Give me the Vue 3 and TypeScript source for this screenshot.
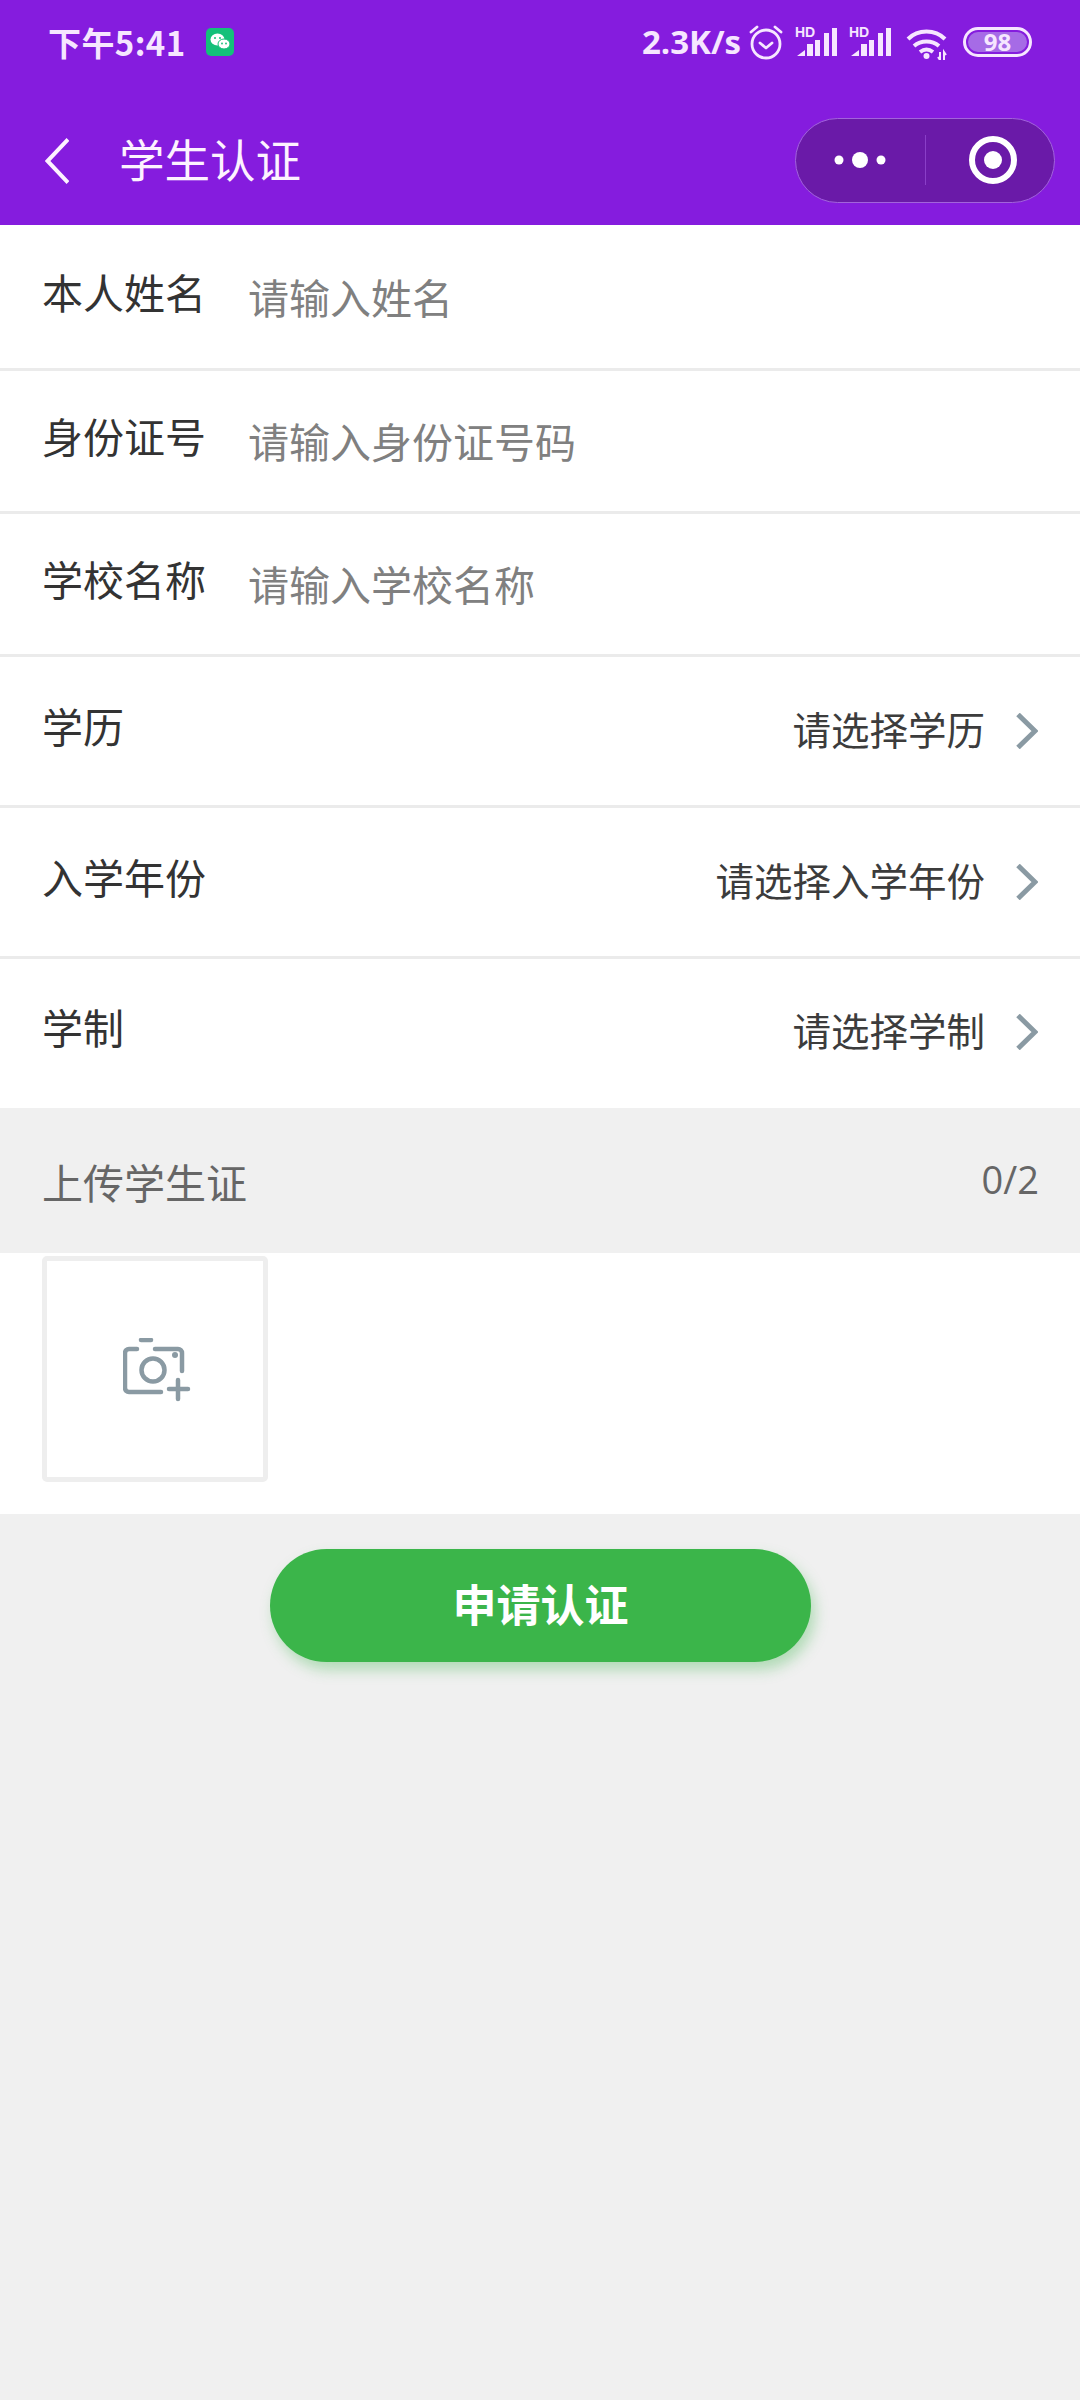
<script setup lang="ts">
const inputRows = [
  { label: '本人姓名', placeholder: '请输入姓名' },
  { label: '身份证号', placeholder: '请输入身份证号码' },
  { label: '学校名称', placeholder: '请输入学校名称' },
]
const selectRows = [
  { label: '学历', value: '请选择学历' },
  { label: '入学年份', value: '请选择入学年份' },
  { label: '学制', value: '请选择学制' },
]
</script>

<template>
  <div class="page">
    <header class="top">
      <div class="status">
        <div class="status-left">
          <span class="time">下午5:41</span>
          <svg class="wechat" width="28" height="28" viewBox="0 0 28 28">
            <rect width="28" height="28" rx="5" fill="#14c07a" />
            <ellipse cx="11.500" cy="11.500" rx="7" ry="6" fill="#fff" />
            <ellipse cx="18" cy="16" rx="6" ry="5" fill="#fff" stroke="#14c07a" stroke-width="1" />
            <circle cx="9" cy="10" r="1" fill="#14c07a" />
            <circle cx="14" cy="10" r="1" fill="#14c07a" />
            <circle cx="16" cy="15.500" r="0.900" fill="#14c07a" />
            <circle cx="20" cy="15.500" r="0.900" fill="#14c07a" />
          </svg>
        </div>
        <div class="status-right">
          <span class="speed">2.3K/s</span>
          <svg class="alarm" width="34" height="36" viewBox="0 0 34 36" fill="none" stroke="#f6e6ff" stroke-width="2.800">
            <circle cx="17" cy="20" r="14" />
            <path d="M11 19l6 5 6-5" stroke-linecap="round" stroke-linejoin="round" />
            <path d="M2 8l6-5M32 8l-6-5" stroke-linecap="round" />
          </svg>
          <svg v-for="n in 2" :key="n" class="signal" width="42" height="32" viewBox="0 0 42 32">
            <text x="0" y="11" class="hd">HD</text>
            <path d="M2 30l8-6v6zM12 18h6v12h-6zM20 14h5v16h-5zM29 7h5v23h-5zM37 2h5v28h-5z" fill="#f6e6ff" />
          </svg>
          <svg class="wifi" width="44" height="32" viewBox="0 0 44 32" fill="none" stroke="#f6e6ff" stroke-width="4">
            <path d="M3 11c10-10 27-10 37 0" />
            <path d="M9 18c7-6 18-6 25 0" />
            <path d="M15 24c4-3 9-3 13 0" />
            <circle cx="21.500" cy="28" r="3" fill="#f6e6ff" stroke="none" />
            <path d="M35 24v8l-2-3M39 32v-8l2 3" stroke-width="2" />
          </svg>
          <div class="battery">
            <div class="battery-fill"></div>
            <span class="battery-text">98</span>
          </div>
        </div>
      </div>
      <div class="nav">
        <svg class="back" width="24" height="46" viewBox="0 0 24 46" fill="none" stroke="#fdf2ff" stroke-width="4">
          <path d="M23 1.500L2.500 23 23 44.500" />
        </svg>
        <span class="title">学生认证</span>
        <div class="capsule">
          <svg width="129" height="85" viewBox="0 0 129 85">
            <circle cx="43" cy="43" r="4.500" fill="#fff" />
            <circle cx="64" cy="43" r="8" fill="#fff" />
            <circle cx="85" cy="43" r="4.500" fill="#fff" />
          </svg>
          <div class="capsule-line"></div>
          <svg width="128" height="85" viewBox="0 0 128 85">
            <circle cx="67" cy="43" r="21" fill="none" stroke="#fff" stroke-width="6" />
            <circle cx="67" cy="43" r="9" fill="#fff" />
          </svg>
        </div>
      </div>
    </header>

    <section class="form">
      <div v-for="row in inputRows" :key="row.label" class="row row-input">
        <span class="label">{{ row.label }}</span>
        <span class="placeholder">{{ row.placeholder }}</span>
      </div>
      <div v-for="row in selectRows" :key="row.label" class="row row-select">
        <span class="label">{{ row.label }}</span>
        <span class="value">{{ row.value }}</span>
        <svg class="chevron" width="22" height="36" viewBox="0 0 22 36" fill="none" stroke="#8a9aa3" stroke-width="5">
          <path d="M2 1.500L19 18 2 34.500" />
        </svg>
      </div>
    </section>

    <div class="upload-head">
      <span>上传学生证</span>
      <span class="count">0/2</span>
    </div>

    <div class="upload-body">
      <div class="upload-box">
        <svg width="68" height="64" viewBox="0 0 68 64" fill="none" stroke="#8a9aa3" stroke-width="4.500" stroke-linecap="round">
          <path d="M14 11H6a4 4 0 0 0-4 4v35a4 4 0 0 0 4 4h32" />
          <path d="M32 11h23a4 4 0 0 1 4 4v18" />
          <path d="M18 2h10" />
          <circle cx="30" cy="32" r="11.500" />
          <circle cx="52" cy="17" r="3" fill="#8a9aa3" stroke="none" />
          <path d="M46 51h19M55 42v19" />
        </svg>
      </div>
    </div>

    <div class="submit-wrap">
      <button class="submit" type="button">申请认证</button>
    </div>
  </div>
</template>

<style scoped>
.page {
  min-height: 2400px;
  background: #f0f0f0;
  font-family: "Noto Sans CJK SC", "Noto Sans", sans-serif;
}

.top {
  height: 225px;
  background: #851cde;
  color: #fdf2ff;
}

.status {
  height: 84px;
  padding: 0 48px 0 48px;
  display: flex;
  justify-content: space-between;
  align-items: center;
}

.status-left,
.status-right {
  display: flex;
  align-items: center;
}

.time {
  font-size: 33px;
  font-weight: 700;
  letter-spacing: 0.400px;
  line-height: 40px;
  color: #f6e6ff;
}

.wechat {
  margin-left: 20px;
}

.speed {
  font-family: "Open Sans", sans-serif;
  font-size: 33px;
  font-weight: 700;
  line-height: 40px;
  color: #f6e6ff;
}

.alarm {
  margin-left: 8px;
}

.signal {
  margin-left: 12px;
  overflow: visible;
}

.hd {
  font-family: "Liberation Sans", sans-serif;
  font-size: 14px;
  font-weight: 700;
  fill: #f6e6ff;
}

.wifi {
  margin-left: 14px;
  margin-top: 3px;
}

.battery {
  position: relative;
  margin-left: 14px;
  width: 69px;
  height: 30px;
  box-sizing: border-box;
  border: 3px solid #f6e6ff;
  border-radius: 15px;
  display: flex;
  align-items: center;
  justify-content: center;
}

.battery-fill {
  position: absolute;
  inset: 2px;
  background: #a66be6;
  border-radius: 10px;
}

.battery-text {
  position: relative;
  font-family: "Open Sans", sans-serif;
  font-size: 24px;
  font-weight: 700;
  line-height: 24px;
  color: #f6e6ff;
}

.nav {
  height: 141px;
  padding: 0 25px 0 45px;
  display: flex;
  align-items: center;
}

.back {
  margin-top: 12px;
}

.title {
  margin-left: 50px;
  margin-top: 6px;
  font-size: 45.500px;
  line-height: 60px;
  color: #fdf2ff;
}

.capsule {
  margin-left: auto;
  margin-top: 11px;
  width: 260px;
  height: 85px;
  box-sizing: border-box;
  border: 1px solid #a263dc;
  border-radius: 43px;
  background: #6a1aa8;
  display: flex;
  align-items: center;
}

.capsule svg {
  flex: none;
  margin-top: -1px;
}

.capsule-line {
  flex: none;
  width: 1px;
  height: 50px;
  background: #8a3fc8;
}

.form {
  background: #fff;
}

.row {
  box-sizing: border-box;
  display: flex;
  padding: 0 42px 0 42px;
  border-bottom: 3px solid #ebebeb;
  color: #333;
}

.row:first-child {
  height: 146px;
}

.row:last-child {
  height: 149px;
  padding-bottom: 3px;
  border-bottom: none;
}

.row-input {
  height: 143px;
  align-items: center;
}

.row-select {
  height: 151px;
  align-items: center;
}

.label {
  width: 206px;
  flex: none;
  font-size: 41px;
  line-height: 56px;
  margin-top: -12px;
}

.placeholder {
  font-size: 41px;
  line-height: 56px;
  color: #808080;
  margin-top: -2px;
}

.value {
  margin-left: auto;
  font-size: 38.500px;
  line-height: 54px;
  color: #3c3c3c;
  margin-top: -6px;
}

.chevron {
  margin-left: 31px;
  margin-top: -1px;
}

.upload-head {
  height: 145px;
  box-sizing: border-box;
  padding: 0 41px 0 42px;
  display: flex;
  justify-content: space-between;
  align-items: center;
  font-size: 41px;
  color: #666;
}

.count {
  font-size: 38px;
  font-family: "Open Sans", sans-serif;
  margin-top: -3px;
}

.upload-body {
  height: 261px;
  box-sizing: border-box;
  padding: 3px 0 0 42px;
  background: #fff;
}

.upload-box {
  width: 226px;
  height: 226px;
  box-sizing: border-box;
  border: 5px solid #eeeeee;
  border-radius: 5px;
  display: flex;
  align-items: center;
  justify-content: center;
}

.upload-box svg {
  margin-left: 4px;
  margin-top: 1px;
}

.submit-wrap {
  padding: 35px 0 0 270px;
}

.submit {
  display: block;
  width: 541px;
  height: 113px;
  padding: 0 0 5px;
  border: none;
  border-radius: 57px;
  background: #3bb54a;
  color: #fff;
  font-family: inherit;
  font-size: 44px;
  font-weight: 700;
  box-shadow: 4px 8px 14px rgba(59, 181, 74, 0.35);
}
</style>
